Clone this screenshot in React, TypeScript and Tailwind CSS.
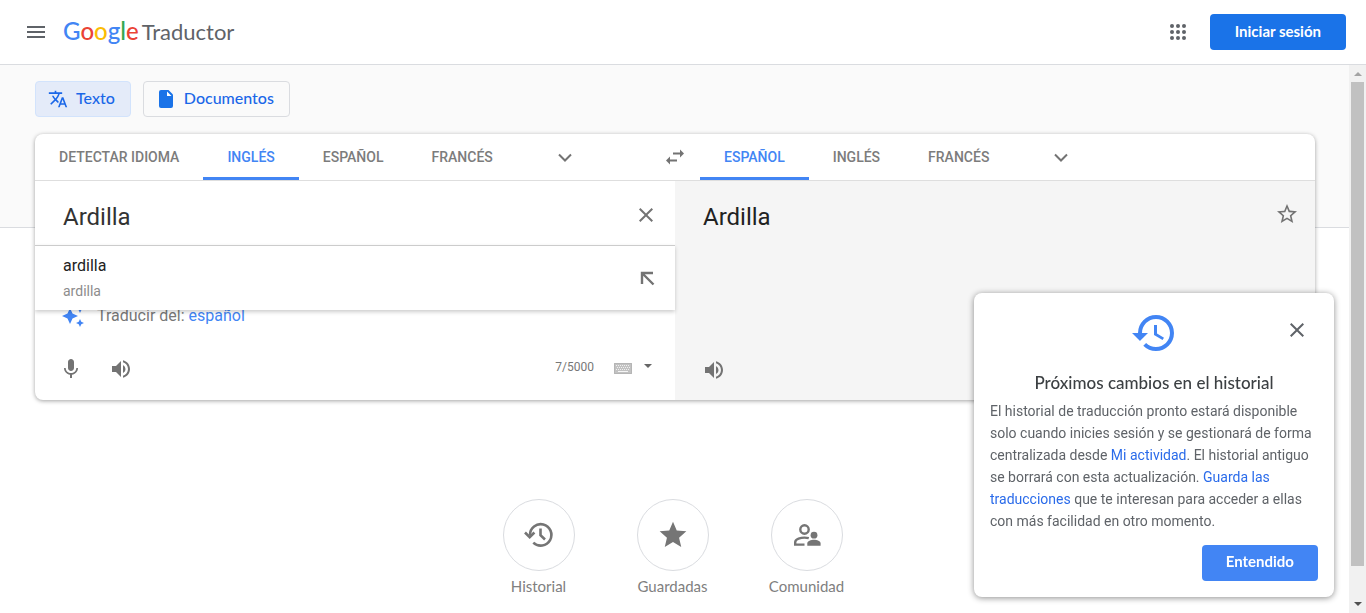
import React, { useState } from "react";
import {
  MdAutoAwesome,
  MdClose,
  MdHistory,
  MdMenu,
  MdMic,
  MdStar,
  MdStarBorder,
  MdTranslate,
  MdVolumeUp,
} from "react-icons/md";

function AppsIcon() {
  return (
    <svg viewBox="0 0 24 24" className="size-6" fill="currentColor" aria-hidden="true">
      {[6, 12, 18].map((y) => [6, 12, 18].map((x) => <circle key={`${x}-${y}`} cx={x} cy={y} r="2" />))}
    </svg>
  );
}

function FileIcon() {
  return (
    <svg viewBox="0 0 24 24" className="size-6" aria-hidden="true">
      <path d="M7 3h7.500L19 7.500V19a2 2 0 0 1-2 2H7a2 2 0 0 1-2-2V5a2 2 0 0 1 2-2z" fill="#1a73e8" />
      <path d="M13 4.500V9h4.500z" fill="#fff" />
    </svg>
  );
}

function ChevronIcon() {
  return (
    <svg viewBox="0 0 24 24" className="size-6" fill="none" stroke="currentColor" strokeWidth="2" aria-hidden="true">
      <path d="M6 9.500 12 15.500 18 9.500" />
    </svg>
  );
}

function InsertArrowIcon() {
  return (
    <svg viewBox="0 0 24 24" className="size-6" fill="none" stroke="currentColor" strokeWidth="2.400" aria-hidden="true">
      <path d="M7 18V7H18M7 7 18.500 18.500" />
    </svg>
  );
}

function SwapIcon() {
  return (
    <svg viewBox="0 0 24 24" className="size-6" fill="currentColor" aria-hidden="true">
      <path d="M17 4.500 21 8.500 17 12.500V9.500H10V7.500H17zM7 11.500V14.500H14V16.500H7V19.500L3 15.500z" />
    </svg>
  );
}

function KeyboardIcon() {
  return (
    <svg viewBox="0 0 18 11" className="h-[11px] w-[18px]" aria-hidden="true">
      <path d="M0 0h18v11H0z" fill="#c2c2c2" />
      <path d="M.5.5h17v10H.5z" fill="none" stroke="#b5b5b5" />
      {[2, 4, 6, 8, 10, 12, 14].map((x) => (
        <path key={x} d={`M${x} 2h1v1h-1zM${x + 1} 4h1v1h-1zM${x} 6h1v1h-1z`} fill="#f0f0f0" />
      ))}
      <path d="M4 8h10v1H4z" fill="#f5f5f5" />
    </svg>
  );
}

function HistoryIcon() {
  return (
    <svg viewBox="0 0 32 32" className="size-8" fill="none" stroke="currentColor" strokeWidth="2.600" aria-hidden="true">
      <path d="M7 16A10.700 10.700 0 1 1 10.300 23.600" />
      <path d="M2 13.500 6.700 18.200 11.400 13.500" />
      <path d="M17.500 9.500V16.300L22 20.500" />
    </svg>
  );
}

function CommunityIcon() {
  return (
    <svg viewBox="0 0 32 32" className="size-8" aria-hidden="true">
      <circle cx="13.500" cy="10.500" r="4.200" fill="none" stroke="currentColor" strokeWidth="2.400" />
      <path d="M13.500 25.600H4.200V23.200C4.200 20 10 18.600 13.500 18.600c1.500 0 3 .2 4.300.6" fill="none" stroke="currentColor" strokeWidth="2.400" />
      <circle cx="23" cy="16.200" r="3.400" fill="currentColor" />
      <path d="M16.300 26.800V24.500C16.300 22 20 20.800 23 20.800s6.600 1.200 6.600 3.700V26.800z" fill="currentColor" />
    </svg>
  );
}

const iconButton = "flex items-center justify-center text-[#737373]";

function LanguageTabs({ label, names, active }: { label: string; names: string[]; active: string }) {
  return (
    <div role="tablist" aria-label={label} className="flex h-full min-w-0 flex-1">
      {names.map((name) => (
        <button
          key={name}
          role="tab"
          aria-selected={name === active}
          className={
            name === active
              ? "border-b-3 border-[#4285f4] px-6 pt-0.5 text-sm font-medium whitespace-nowrap text-[#4285f4]"
              : "border-b-3 border-transparent px-6 pt-0.5 text-sm font-medium whitespace-nowrap text-[#7c7c7c]"
          }
        >
          {name}
        </button>
      ))}
      <button aria-label="Más idiomas" className={`${iconButton} ml-6 w-12`}>
        <ChevronIcon />
      </button>
    </div>
  );
}

function SourcePanel() {
  const [text, setText] = useState("Ardilla");
  return (
    <div className="relative min-w-0">
      <div className="flex h-16 items-start">
        <textarea
          aria-label="Texto de origen"
          rows={1}
          value={text}
          onChange={(e) => setText(e.target.value)}
          className="mt-5 h-8 min-w-0 flex-1 resize-none overflow-hidden pl-7 text-2xl text-[#333] outline-none"
        />
        <button aria-label="Borrar texto" onClick={() => setText("")} className={`${iconButton} mt-2.5 mr-[17px] h-12 w-6`}>
          <MdClose className="size-6" />
        </button>
      </div>
      <div className="absolute inset-x-0 top-16 flex h-[65px] items-center justify-between border-t border-[#ccc] bg-white pr-4 pl-7 shadow-[0_2px_4px_rgba(0,0,0,0.2)]">
        <div className="pb-0.5">
          <div className="text-base leading-7 text-[#222]">ardilla</div>
          <div className="text-sm leading-[22px] text-[#8c8c8c]">ardilla</div>
        </div>
        <button aria-label="Usar sugerencia" className={iconButton}>
          <InsertArrowIcon />
        </button>
      </div>
      <div className="mt-[59px] flex h-6 items-center pl-[26px] text-base text-[#777]">
        <MdAutoAwesome className="mr-3 size-6 text-[#4285f4]" />
        <p>
          Traducir del: <a href="#espanol" className="text-[#4285f4]">español</a>
        </p>
      </div>
      <div className="mt-[17px] flex h-12 items-center pr-[23px] pl-3">
        <button aria-label="Traducir por voz" className={`${iconButton} mr-0.5 size-12`}>
          <MdMic className="size-6" />
        </button>
        <button aria-label="Escuchar" className={`${iconButton} size-12`}>
          <MdVolumeUp className="size-6" />
        </button>
        <span className="mr-5 ml-auto pb-1 text-xs text-[#777]">{text.length}/5000</span>
        <button aria-label="Herramientas de introducción" className="flex items-start gap-3 pb-0.5">
          <KeyboardIcon />
          <svg viewBox="0 0 8 4" className="mt-px h-1 w-2" aria-hidden="true">
            <path d="M0 0h8L4 4z" fill="#666" />
          </svg>
        </button>
      </div>
    </div>
  );
}

function ResultPanel() {
  return (
    <div className="flex min-w-0 flex-col bg-[#f5f5f5]">
      <div className="flex items-center justify-between pt-5 pr-4 pl-7">
        <p className="text-2xl leading-8 text-[#222]">Ardilla</p>
        <button aria-label="Guardar traducción" className={`${iconButton} pb-1.5`}>
          <MdStarBorder className="size-6" />
        </button>
      </div>
      <button aria-label="Escuchar traducción" className={`${iconButton} mt-auto mb-1.5 ml-[15px] size-12`}>
        <MdVolumeUp className="size-6" />
      </button>
    </div>
  );
}

function Shortcut({ label, children }: { label: string; children: React.ReactNode }) {
  return (
    <button className="flex w-[134px] flex-col items-center font-['Lato',sans-serif] text-[15px] leading-5 text-[#808080]">
      <span className="flex size-18 items-center justify-center rounded-full border border-[#dadce0] text-[#757575]">{children}</span>
      <span className="mt-[5px]">{label}</span>
    </button>
  );
}

function HistoryNotice() {
  return (
    <section
      aria-label="Próximos cambios en el historial"
      className="fixed right-8 bottom-4 flex w-[360px] flex-col rounded-lg bg-white p-4 shadow-[0_1px_6px_rgba(0,0,0,0.45)]"
    >
      <button aria-label="Cerrar" className="absolute top-[25px] right-[25px] text-[#5f6368]">
        <MdClose className="size-6" />
      </button>
      <MdHistory className="size-12 self-center text-[#4285f4]" />
      <h2 className="mt-3.5 text-center font-['Lato',sans-serif] text-[17px] leading-6 font-medium text-[#3c4043]">
        Próximos cambios en el historial
      </h2>
      <p className="mt-[5px] text-sm leading-[22px] text-[#5f6368]">
        El historial de traducción pronto estará disponible solo cuando inicies sesión y se gestionará de forma centralizada desde{" "}
        <a href="#actividad" className="text-[#2a6bea]">Mi actividad</a>. El historial antiguo se borrará con esta actualización.{" "}
        <a href="#guardadas" className="text-[#2a6bea]">Guarda las traducciones</a> que te interesan para acceder a ellas con más
        facilidad en otro momento.
      </p>
      <button className="mt-[13px] h-9 self-end rounded bg-[#4285f4] px-6 pb-1 font-['Lato',sans-serif] text-[15px] font-bold text-white">
        Entendido
      </button>
    </section>
  );
}

function ScrollRail() {
  return (
    <div aria-hidden="true" className="flex w-[17px] shrink-0 flex-col items-center bg-[#f1f1f1]">
      <div className="flex h-[17px] items-center">
        <svg viewBox="0 0 8 4" className="h-1 w-2">
          <path d="M4 0 8 4H0z" fill="#a3a3a3" />
        </svg>
      </div>
      <div className="w-[13px] flex-1 bg-[#c1c1c1]" />
      <div className="flex h-[47px] items-end pb-[7px]">
        <svg viewBox="0 0 8 4" className="h-1 w-2">
          <path d="M0 0h8L4 4z" fill="#505050" />
        </svg>
      </div>
    </div>
  );
}

export default function App() {
  return (
    <div className="flex h-screen flex-col overflow-hidden bg-white font-['Roboto',sans-serif]">
      <header className="flex h-[65px] shrink-0 items-center border-b border-[#dadce0] pr-5 pl-6">
        <button aria-label="Menú principal" className="text-[#5f6368]">
          <MdMenu className="size-6" />
        </button>
        <a href="#inicio" className="ml-[15px] flex items-baseline gap-[3px] pb-0.5 font-['Lato',sans-serif]">
          <span className="text-2xl font-medium">
            <span className="text-[#4285f4]">G</span>
            <span className="text-[#ea4335]">o</span>
            <span className="text-[#fbbc05]">o</span>
            <span className="text-[#4285f4]">g</span>
            <span className="text-[#34a853]">l</span>
            <span className="text-[#ea4335]">e</span>
          </span>
          <span className="text-[22px] text-[#5f6368]">Traductor</span>
        </a>
        <button aria-label="Aplicaciones de Google" className="mr-5 ml-auto text-[#5f6368]">
          <AppsIcon />
        </button>
        <a href="#acceso" className="flex h-9 items-center rounded bg-[#1a73e8] px-[25px] pb-0.5 font-['Lato',sans-serif] text-[15px] font-bold text-white">
          Iniciar sesión
        </a>
      </header>

      <div className="flex min-h-0 flex-1">
        <main className="min-w-0 flex-1 overflow-hidden">
          <div className="flex h-[163px] items-start gap-3 border-b border-[#dadce0] bg-[#fafafa] pt-4 pl-[35px] font-['Lato',sans-serif] text-base font-medium text-[#1a67e8]">
            <button className="flex h-9 items-center gap-2 rounded border border-[#d2e3fc] bg-[#e4ebf9] pr-[15px] pl-3">
              <MdTranslate className="size-5" />
              <span className="pb-0.5">Texto</span>
            </button>
            <button className="flex h-9 items-center gap-1.5 rounded border border-[#dadce0] pr-[15px] pl-2.5">
              <FileIcon />
              <span className="pb-0.5">Documentos</span>
            </button>
          </div>

          <div className="pr-[34px] pl-[35px]">
            <section aria-label="Traducción de texto" className="relative -mt-[94px] overflow-hidden rounded-lg bg-white shadow-[0_1px_4px_rgba(0,0,0,0.37)]">
              <div className="flex h-[47px] items-stretch border-b border-[#dedede]">
                <LanguageTabs label="Idioma de origen" names={["DETECTAR IDIOMA", "INGLÉS", "ESPAÑOL", "FRANCÉS"]} active="INGLÉS" />
                <button aria-label="Intercambiar idiomas" className={`${iconButton} w-[50px]`}>
                  <SwapIcon />
                </button>
                <LanguageTabs label="Idioma de destino" names={["ESPAÑOL", "INGLÉS", "FRANCÉS"]} active="ESPAÑOL" />
              </div>
              <div className="grid min-h-[219px] grid-cols-2">
                <SourcePanel />
                <ResultPanel />
              </div>
            </section>
          </div>

          <nav aria-label="Accesos" className="mt-[99px] flex justify-center pr-1">
            <Shortcut label="Historial">
              <HistoryIcon />
            </Shortcut>
            <Shortcut label="Guardadas">
              <MdStar className="size-8" />
            </Shortcut>
            <Shortcut label="Comunidad">
              <CommunityIcon />
            </Shortcut>
          </nav>
        </main>
        <ScrollRail />
      </div>

      <HistoryNotice />
    </div>
  );
}
